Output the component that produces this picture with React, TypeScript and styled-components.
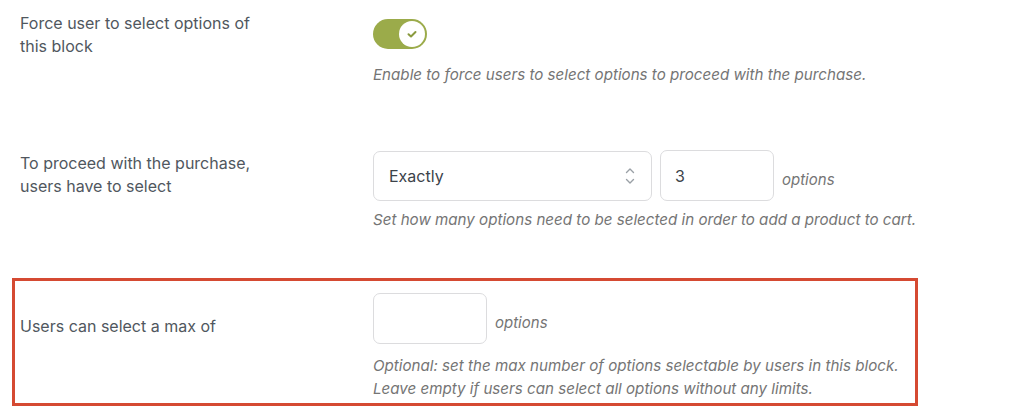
import styled, { createGlobalStyle } from "styled-components";

const GlobalStyle = createGlobalStyle`
  body {
    margin: 0;
    background: #fff;
    font-family: Inter, "Noto Sans", "Liberation Sans", sans-serif;
    color: #50575e;
  }
`;

const Page = styled.div`
  padding: 12px 0 0 12px;
  width: 906px;
`;

const Row = styled.div<{ $gap?: number; $highlight?: boolean }>`
  display: flex;
  align-items: flex-start;
  margin-top: ${(p) => p.$gap ?? 0}px;
  padding: ${(p) => (p.$highlight ? "12px 0 3px 5px" : "0 0 0 8px")};
  border: ${(p) => (p.$highlight ? "3px solid #d54a32" : "none")};
`;

const Label = styled.div<{ $top?: number }>`
  width: 353px;
  flex-shrink: 0;
  padding-top: ${(p) => p.$top ?? 0}px;
  font-size: 16px;
  line-height: 23px;
  color: #50575e;
`;

const Field = styled.div<{ $top?: number }>`
  display: flex;
  flex-direction: column;
  padding-top: ${(p) => p.$top ?? 0}px;
`;

const Controls = styled.div`
  display: flex;
  align-items: center;
  gap: 8px;
`;

const Toggle = styled.div`
  width: 54px;
  height: 30px;
  border-radius: 15px;
  background: #9bab4a;
  display: flex;
  align-items: center;
  justify-content: flex-end;
  padding: 0 2px;
  box-sizing: border-box;
`;

const Knob = styled.div`
  width: 26px;
  height: 26px;
  border-radius: 50%;
  background: #fff;
  display: flex;
  align-items: center;
  justify-content: center;
`;

const Select = styled.div`
  width: 279px;
  height: 50px;
  box-sizing: border-box;
  border: 1px solid #dcdcde;
  border-radius: 7px;
  display: flex;
  align-items: center;
  justify-content: space-between;
  padding: 0 16px 0 15px;
  font-size: 16px;
  color: #3c434a;
`;

const NumberBox = styled.div<{ $w: number }>`
  width: ${(p) => p.$w}px;
  height: 51px;
  box-sizing: border-box;
  border: 1px solid #dcdcde;
  border-radius: 7px;
  display: flex;
  align-items: center;
  padding: 0 14px;
  font-size: 16px;
  color: #3c434a;
`;

const Unit = styled.span`
  font-size: 15px;
  font-style: italic;
  color: #757575;
  margin-top: 8px;
`;

const Desc = styled.p<{ $top?: number }>`
  margin: ${(p) => p.$top ?? 0}px 0 0;
  font-size: 15.15px;
  font-style: italic;
  line-height: 23px;
  color: #757575;
  white-space: nowrap;
`;

const UpDown = () => (
  <svg width="10" height="18" viewBox="0 0 10 18" fill="none" stroke="#9aa0a6" strokeWidth="1.4" strokeLinecap="round" strokeLinejoin="round">
    <path d="M1.5 5.5 5 2l3.5 3.5" />
    <path d="M1.5 12.5 5 16l3.5-3.5" />
  </svg>
);

const Check = () => (
  <svg width="12" height="10" viewBox="0 0 12 10" fill="none" stroke="#8a9a3e" strokeWidth="2" strokeLinecap="round" strokeLinejoin="round">
    <path d="M2.5 5.2 5 7.5l4.5-4.5" />
  </svg>
);

export default function App() {
  return (
    <>
      <GlobalStyle />
      <Page>
        <Row>
          <Label>
            Force user to select options of
            <br />
            this block
          </Label>
          <Field $top={7}>
            <Toggle>
              <Knob>
                <Check />
              </Knob>
            </Toggle>
            <Desc $top={14}>Enable to force users to select options to proceed with the purchase.</Desc>
          </Field>
        </Row>

        <Row $gap={64}>
          <Label $top={1.5}>
            To proceed with the purchase,
            <br />
            users have to select
          </Label>
          <Field>
            <Controls>
              <Select>
                <span>Exactly</span>
                <UpDown />
              </Select>
              <NumberBox $w={114}>3</NumberBox>
              <Unit>options</Unit>
            </Controls>
            <Desc $top={7}>Set how many options need to be selected in order to add a product to cart.</Desc>
          </Field>
        </Row>

        <Row $gap={47} $highlight>
          <Label $top={21.5}>Users can select a max of</Label>
          <Field>
            <Controls>
              <NumberBox $w={114} />
              <Unit>options</Unit>
            </Controls>
            <Desc $top={10}>
              Optional: set the max number of options selectable by users in this block.
              <br />
              Leave empty if users can select all options without any limits.
            </Desc>
          </Field>
        </Row>
      </Page>
    </>
  );
}
